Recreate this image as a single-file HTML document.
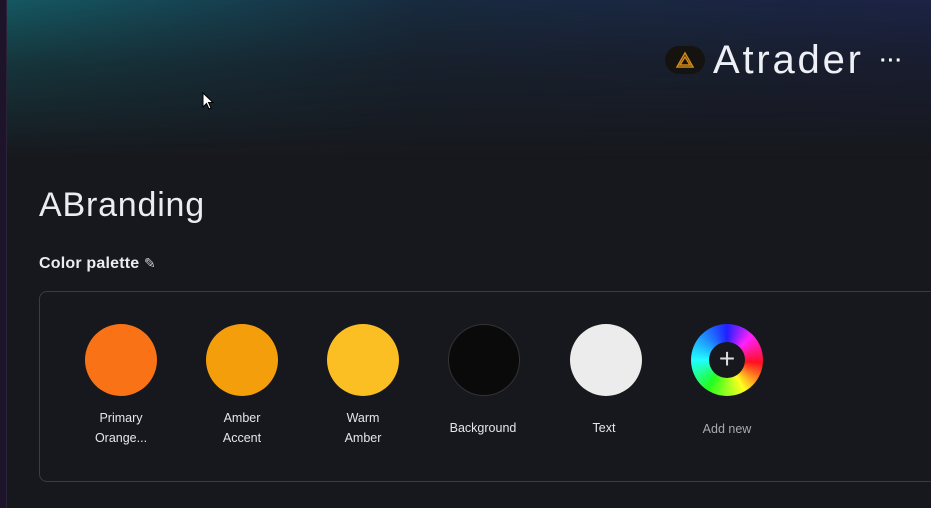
<!DOCTYPE html>
<html><head><meta charset="utf-8"><style>
*{margin:0;padding:0;box-sizing:border-box}
body{width:931px;height:508px;overflow:hidden;background:#17181d;font-family:"Liberation Sans",sans-serif;position:relative;color:#e8e8ec}
.grad{position:absolute;left:0;top:0;width:931px;height:160px;background:linear-gradient(90deg,rgba(20,100,110,.85),rgba(25,55,85,.6) 45%,rgba(30,40,85,.7));-webkit-mask:linear-gradient(180deg,#000,rgba(0,0,0,.45) 40%,transparent);mask:linear-gradient(180deg,#000,rgba(0,0,0,.45) 40%,transparent)}
.strip{position:absolute;left:0;top:0;width:7px;height:508px;background:#1d1429;border-right:1px solid #2a2238}
.logo{position:absolute;left:665px;top:46px;width:40px;height:28px;border-radius:14px;background:#14130f}
.title{position:absolute;left:713px;top:38px;font-size:40px;color:#eef0f6;letter-spacing:2.8px}
.dots{position:absolute;left:880px;top:50px;font-size:20px;color:#fff;letter-spacing:1px;font-weight:bold}
h1{position:absolute;left:39px;top:186px;font-size:34px;font-weight:normal;color:#ececf0;letter-spacing:0.8px}
.cp{position:absolute;left:39px;top:255px;font-size:16px;font-weight:bold;color:#ececf0;letter-spacing:0.2px}
.card{position:absolute;left:39px;top:291px;width:910px;height:191px;border:1px solid #3b3c42;border-radius:8px}
.c{position:absolute;top:324px;width:72px;height:72px;border-radius:50%}
.l{position:absolute;width:110px;text-align:center;font-size:12.5px;line-height:20px;color:#e6e6ea}
</style></head><body>
<div class="grad"></div><div class="strip"></div>
<svg style="position:absolute;left:202px;top:92px" width="12" height="18" viewBox="0 0 12 18"><path d="M1 1 L1 15 L4.5 11.5 L7 17 L9 16 L6.5 10.5 L11 10.5 Z" fill="#fff" stroke="#000" stroke-width="1"/></svg>
<div class="logo"><svg width="40" height="28" viewBox="0 0 40 28"><path d="M20 7 L28 21 L12 21 Z M20 11 L25 19 L15 19 Z" fill="none" stroke="#d08a1a" stroke-width="1.5"/></svg></div>
<div class="title">Atrader</div>
<div class="dots">···</div>
<h1>ABranding</h1>
<div class="cp">Color palette <span style="font-weight:normal;font-size:14px;color:#ccc">✎</span></div>
<div class="card"></div>
<div class="c" style="left:85px;background:#f97316"></div>
<div class="c" style="left:206px;background:#f59e0b"></div>
<div class="c" style="left:327px;background:#fbbf24"></div>
<div class="c" style="left:448px;background:#0a0a0a;border:1px solid #333"></div>
<div class="c" style="left:570px;background:#ececec"></div>
<div class="c" style="left:691px;background:conic-gradient(#2020ff,#ff20ff 45deg,#ff1020 95deg,#ffff20 150deg,#20ff20 215deg,#20ffff 270deg,#2020ff)"></div>
<div style="position:absolute;left:709px;top:342px;width:36px;height:36px;border-radius:50%;background:#17181d;color:#ddd;font-size:28px;line-height:34px;text-align:center">+</div>
<div class="l" style="left:66px;top:408px">Primary<br>Orange...</div>
<div class="l" style="left:187px;top:408px">Amber<br>Accent</div>
<div class="l" style="left:308px;top:408px">Warm<br>Amber</div>
<div class="l" style="left:428px;top:418px">Background</div>
<div class="l" style="left:549px;top:418px">Text</div>
<div class="l" style="left:672px;top:419px;color:#a8a8b0">Add new</div>
</body></html>
